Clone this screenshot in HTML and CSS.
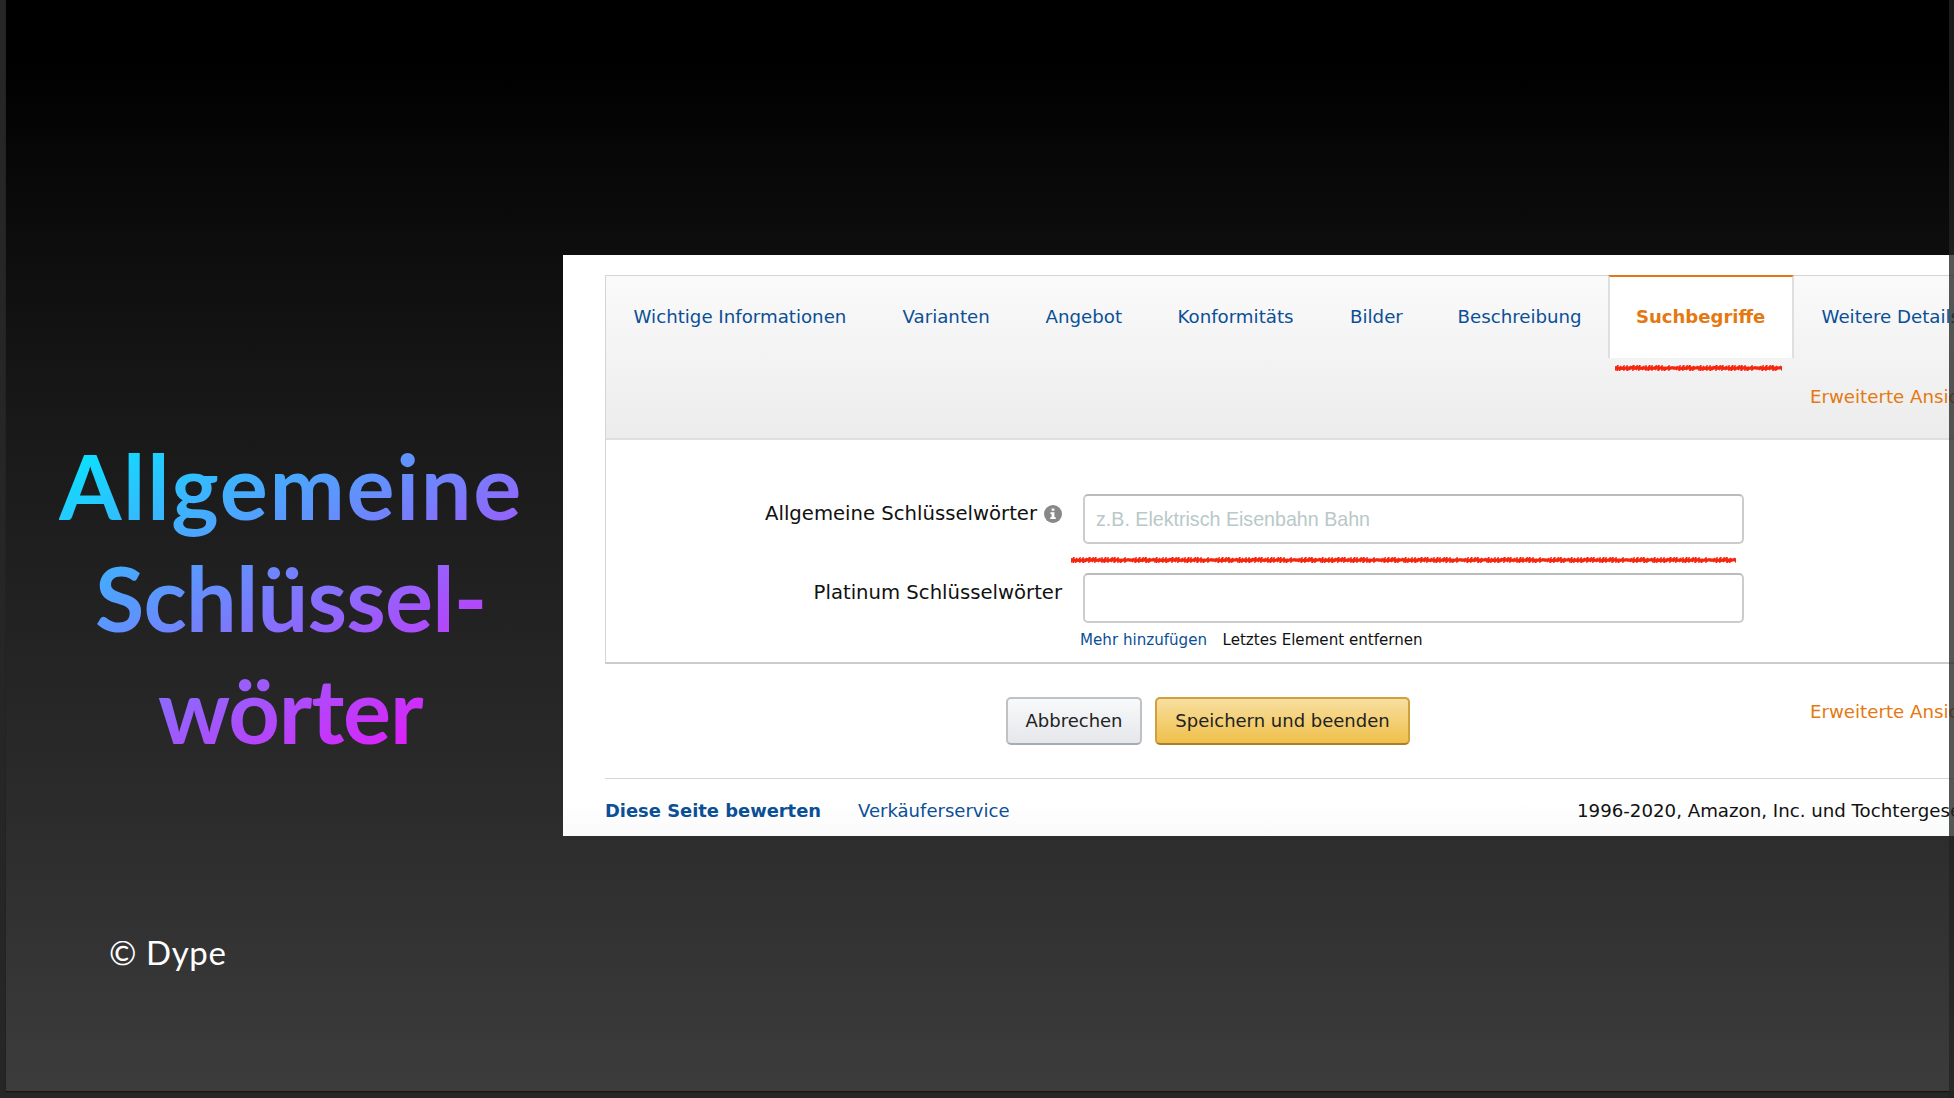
FILE: index.html
```html
<!DOCTYPE html>
<html lang="de">
<head>
<meta charset="utf-8">
<title>Allgemeine Schlüsselwörter</title>
<link rel="stylesheet" href="styles.css">
</head>
<body>
<svg width="0" height="0" class="defs" aria-hidden="true">
  <defs>
    <pattern id="scribble" width="83" height="6" patternUnits="userSpaceOnUse">
      <path d="M0 1V5L3 0L2 6L6 1L5 5L9 1L9 5L12 1L12 6L16 1L14 5L19 0L18 5L22 1L21 5L25 0L24 5L28 2L27 5L31 1L31 5L35 0L33 6L37 1L37 5L41 1L40 5L44 0L43 6L47 1L47 5L51 2L49 6L54 1L54 5L57 2L59 4L62 2L61 5L65 1L64 6L69 0L68 5L72 1L71 5L75 0L75 6L79 1L78 5L83 1" fill="none" stroke="#f5250f" stroke-width="1.5"/>
      <path d="M0 3L8 3.4L16 2.7L25 3L34 3.5L43 2.8L52 3.3L58 2.8L67 3.4L75 2.9L83 3" fill="none" stroke="#f5250f" stroke-width="3"/>
    </pattern>
  </defs>
</svg>
<div class="slide">
  <aside class="caption">
    <h1 class="title"><span class="line l1">Allgemeine</span><span class="line l2">Schlüssel-</span><span class="line l3">wörter</span></h1>
    <p class="credit">© Dype</p>
  </aside>
  <main class="panel">
    <section class="box">
      <header class="tabs">
        <nav class="tabrow">
          <a class="tab t1">Wichtige Informationen</a>
          <a class="tab t2">Varianten</a>
          <a class="tab t3">Angebot</a>
          <a class="tab t4">Konformitäts</a>
          <a class="tab t5">Bilder</a>
          <a class="tab t6">Beschreibung</a>
          <a class="tab active">Suchbegriffe
            <svg class="mark mark-tab" width="167" height="6"><rect width="167" height="6" fill="url(#scribble)"/></svg>
          </a>
          <a class="tab t8">Weitere Details</a>
        </nav>
        <a class="advanced">Erweiterte Ansicht</a>
      </header>
      <div class="form">
        <div class="row">
          <label class="label">Allgemeine Schlüsselwörter<svg class="info" width="18" height="18" viewBox="0 0 18 18"><circle cx="9" cy="9" r="9" fill="#888"/><path d="M7.6 3.5h2.8v2.3H7.6zM6.4 7.3h4v5h1.4v1.6H6.2v-1.6h1.4V8.9H6.4z" fill="#fff"/></svg></label>
          <div class="field">z.B. Elektrisch Eisenbahn Bahn
            <svg class="mark mark-field" width="665" height="6"><rect width="665" height="6" fill="url(#scribble)"/></svg>
          </div>
        </div>
        <div class="row">
          <label class="label">Platinum Schlüsselwörter</label>
          <div class="field"></div>
        </div>
        <div class="small"><a class="more">Mehr hinzufügen</a><span class="remove">Letztes Element entfernen</span></div>
      </div>
    </section>
    <div class="actions">
      <button class="btn cancel">Abbrechen</button>
      <button class="btn save">Speichern und beenden</button>
      <a class="advanced lower">Erweiterte Ansicht</a>
    </div>
    <footer class="foot">
      <a class="rate">Diese Seite bewerten</a>
      <a class="service">Verkäuferservice</a>
      <span class="legal">1996-2020, Amazon, Inc. und Tochtergesellschaften</span>
    </footer>
  </main>
</div>
<div class="edge"></div>
</body>
</html>
```
FILE: styles.css
```css
* { box-sizing: border-box; }
body {
  margin: 0;
  width: 1954px;
  height: 1098px;
  overflow: hidden;
  position: relative;
  background: #262626;
  font-family: "DejaVu Sans", sans-serif;
  font-size: 18px;
}
.defs { position: absolute; }
.slide {
  display: flex;
  width: 1948px;
  height: 1091px;
  margin-left: 6px;
  background: linear-gradient(#000 0, #000 60px, #0d0d0d 245px, #191919 430px, #2d2d2d 840px, #3c3c3c 1091px);
  box-shadow: 0 1px 1px #161616;
}
.caption { width: 557px; flex: none; padding-top: 429px; }
.title {
  margin: 0 0 0 53px;
  width: 470px;
  height: 336px;
  font: 700 90px/112px Lato, sans-serif;
  color: transparent;
  background: linear-gradient(150deg, #10dcff 8%, #e11cf9 87%);
  -webkit-background-clip: text;
  background-clip: text;
}
.line { display: block; white-space: nowrap; }
.l1 { letter-spacing: 1.7px; }
.l2 { padding-left: 36px; letter-spacing: -0.8px; }
.l3 { padding-left: 99px; letter-spacing: -1.2px; }
.credit {
  margin: 165px 0 0 103px;
  font: 400 33px/44px Lato, sans-serif;
  letter-spacing: .6px;
  color: #fff;
}
.panel {
  width: 1391px;
  height: 581px;
  flex: none;
  margin-top: 255px;
  padding: 20px 0 0 42px;
  overflow: hidden;
  background: linear-gradient(#fff 94%, #fafafa);
  white-space: nowrap;
}
.box {
  height: 389px;
  border: 1px solid #d5d5d5;
  border-right: 0;
  border-bottom: 2px solid #ccc;
}
.tabs {
  height: 164px;
  background: linear-gradient(#fafafa, #ececec);
  border-bottom: 2px solid #dfdfdf;
}
.tabrow { display: flex; height: 82px; }
.tab {
  flex: none;
  padding: 27px 0 0 27.5px;
  height: 82px;
  line-height: 28px;
  font-size: 18.2px;
  color: #0b4f96;
}
.t1 { width: 269px; }
.t2 { width: 143px; }
.t3 { width: 132px; }
.t4 { width: 172.5px; }
.t5 { width: 107.5px; }
.t6 { width: 178px; }
.active {
  position: relative;
  width: 186px;
  height: 83px;
  margin-top: -1px;
  padding: 26px 0 0 26px;
  font-size: 18.05px;
  font-weight: 700;
  color: #e47911;
  background: #fff;
  border: 2px solid #dfdfdf;
  border-top-color: #dd7a1a;
  border-bottom: 0;
}
.mark { position: absolute; display: block; }
.mark-tab { left: 5px; top: 88px; }
.advanced {
  display: block;
  margin: 25px 0 0 1204px;
  line-height: 28px;
  color: #e47911;
  font-size: 18.2px;
}
.form { padding-top: 54px; }
.row { display: flex; height: 79px; }
.label {
  width: 456px;
  display: flex;
  justify-content: flex-end;
  align-items: center;
  height: 38px;
  color: #111;
  font-size: 19.65px;
}
.info { margin-left: 7px; margin-top: 2px; }
.field {
  position: relative;
  width: 661px;
  height: 50px;
  margin-left: 21px;
  padding-left: 11px;
  border: 2px solid #ccc;
  border-top-color: #bbb;
  border-radius: 5px;
  background: #fff;
  font: 19.65px/47px "Liberation Sans", sans-serif;
  color: #b9c8c8;
}
.mark-field { left: -14px; top: 61px; }
.small { display: flex; margin: -23px 0 0 474px; font-size: 15.1px; line-height: 22px; }
.more { width: 142.5px; color: #0b4f96; }
.remove { color: #111; }
.actions { display: flex; height: 114px; padding: 33px 0 0 401px; }
.btn {
  flex: none;
  height: 48px;
  padding: 0 0 2px;
  border: 2px solid #bfc1c3;
  border-bottom-color: #a5acb5;
  border-radius: 5px;
  font: 18px "DejaVu Sans", sans-serif;
  color: #222;
}
.cancel { width: 136px; background: linear-gradient(#f8f9fa, #e5e7eb); }
.save {
  width: 255px;
  margin-left: 13px;
  background: linear-gradient(#f8dfa0, #efc04a);
  border-color: #d0a03c;
  border-bottom-color: #a9802a;
}
.lower { flex: none; margin: 1px 0 0 400px; }
.foot {
  display: flex;
  height: 58px;
  border-top: 1px solid #d8d8d8;
  padding-top: 18px;
  line-height: 28px;
}
.rate { flex: none; width: 253px; font-weight: 700; font-size: 17.9px; color: #0b4f96; }
.service { flex: none; width: 719px; font-size: 18.05px; color: #0b4f96; }
.legal { color: #111; font-size: 18.2px; }
.edge {
  position: absolute;
  top: 0;
  right: 0;
  width: 5px;
  height: 1098px;
  background: rgba(34, 36, 36, .77);
}
```
